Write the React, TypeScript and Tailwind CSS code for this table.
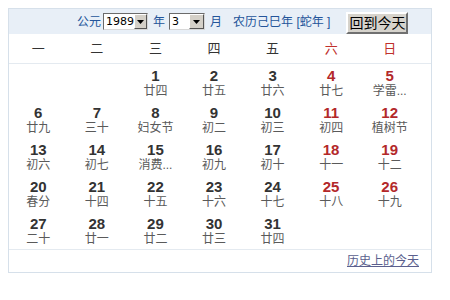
const weekdays = ["一", "二", "三", "四", "五", "六", "日"];

type Day = { d: number; l: string } | null;

const rows: Day[][] = [
  [null, null, { d: 1, l: "廿四" }, { d: 2, l: "廿五" }, { d: 3, l: "廿六" }, { d: 4, l: "廿七" }, { d: 5, l: "学雷..." }],
  [{ d: 6, l: "廿九" }, { d: 7, l: "三十" }, { d: 8, l: "妇女节" }, { d: 9, l: "初二" }, { d: 10, l: "初三" }, { d: 11, l: "初四" }, { d: 12, l: "植树节" }],
  [{ d: 13, l: "初六" }, { d: 14, l: "初七" }, { d: 15, l: "消费..." }, { d: 16, l: "初九" }, { d: 17, l: "初十" }, { d: 18, l: "十一" }, { d: 19, l: "十二" }],
  [{ d: 20, l: "春分" }, { d: 21, l: "十四" }, { d: 22, l: "十五" }, { d: 23, l: "十六" }, { d: 24, l: "十七" }, { d: 25, l: "十八" }, { d: 26, l: "十九" }],
  [{ d: 27, l: "二十" }, { d: 28, l: "廿一" }, { d: 29, l: "廿二" }, { d: 30, l: "廿三" }, { d: 31, l: "廿四" }, null, null],
];

const FakeSelect = ({ value, width }: { value: string; width: string }) => (
  <div className={`${width} h-[17px] flex border border-t-[#6b6b6b] border-l-[#6b6b6b] border-r-[#d8d8d8] border-b-[#d8d8d8] bg-white`}>
    <span className="flex-1 pl-[2px] text-[11px] leading-[15px] text-black font-['DejaVu_Sans',sans-serif]">
      {value}
    </span>
    <div className="w-[15px] h-full bg-[#d4d0c8] border border-t-white border-l-white border-r-[#555] border-b-[#555] flex items-center justify-center">
      <svg width="7" height="4" viewBox="0 0 7 4">
        <path d="M0 0h7L3.5 4z" fill="#000" />
      </svg>
    </div>
  </div>
);

export default function App() {
  return (
    <div className="w-[450px] h-[300px] bg-white pt-2 pl-2 font-['Liberation_Sans','Noto_Sans_CJK_SC',sans-serif]">
      <div className="w-[424px] h-[265px] border border-[#d6e0ea] flex flex-col">
        <div className="h-[25px] bg-[#e8eff7] flex items-center pl-[68px] text-[12px] text-[#24559a]">
          <span>公元</span>
          <div className="ml-[2px]">
            <FakeSelect value="1989" width="w-[45px]" />
          </div>
          <span className="ml-[5px]">年</span>
          <div className="ml-[4px]">
            <FakeSelect value="3" width="w-[36px]" />
          </div>
          <span className="ml-[5px]">月</span>
          <span className="ml-[11px]">农历己巳年 [蛇年 ]</span>
          <button className="ml-[16px] w-[62px] h-[22px] mt-[2px] bg-[#d6d3cc] border-2 border-t-white border-l-white border-r-[#707070] border-b-[#707070] text-[14px] leading-[18px] text-black">
            回到今天
          </button>
        </div>
        <div className="h-[29px] w-[410px] grid grid-cols-7 items-center text-[13px]">
          {weekdays.map((w, i) => (
            <span key={w} className={`text-center ${i >= 5 ? "text-[#c0302c]" : "text-[#333]"}`}>
              {w}
            </span>
          ))}
        </div>
        <div className="border-t border-[#e4eaf0] h-[186px]">
          {rows.map((row, r) => (
            <div key={r} className="h-[37px] w-[410px] grid grid-cols-7">
              {row.map((c, i) => (
                <div key={i} className="flex flex-col items-center pt-[3px]">
                  {c && (
                    <>
                      <span className={`text-[15px] leading-[17px] font-bold ${i >= 5 ? "text-[#b3282a]" : "text-[#333]"}`}>
                        {c.d}
                      </span>
                      <span className="text-[12px] leading-[14px] text-[#5a5a5a]">{c.l}</span>
                    </>
                  )}
                </div>
              ))}
            </div>
          ))}
        </div>
        <div className="flex-1 border-t border-[#e4eaf0] flex items-center justify-end pr-[12px]">
          <span className="text-[12px] text-[#5b5f8e] underline">历史上的今天</span>
        </div>
      </div>
    </div>
  );
}
